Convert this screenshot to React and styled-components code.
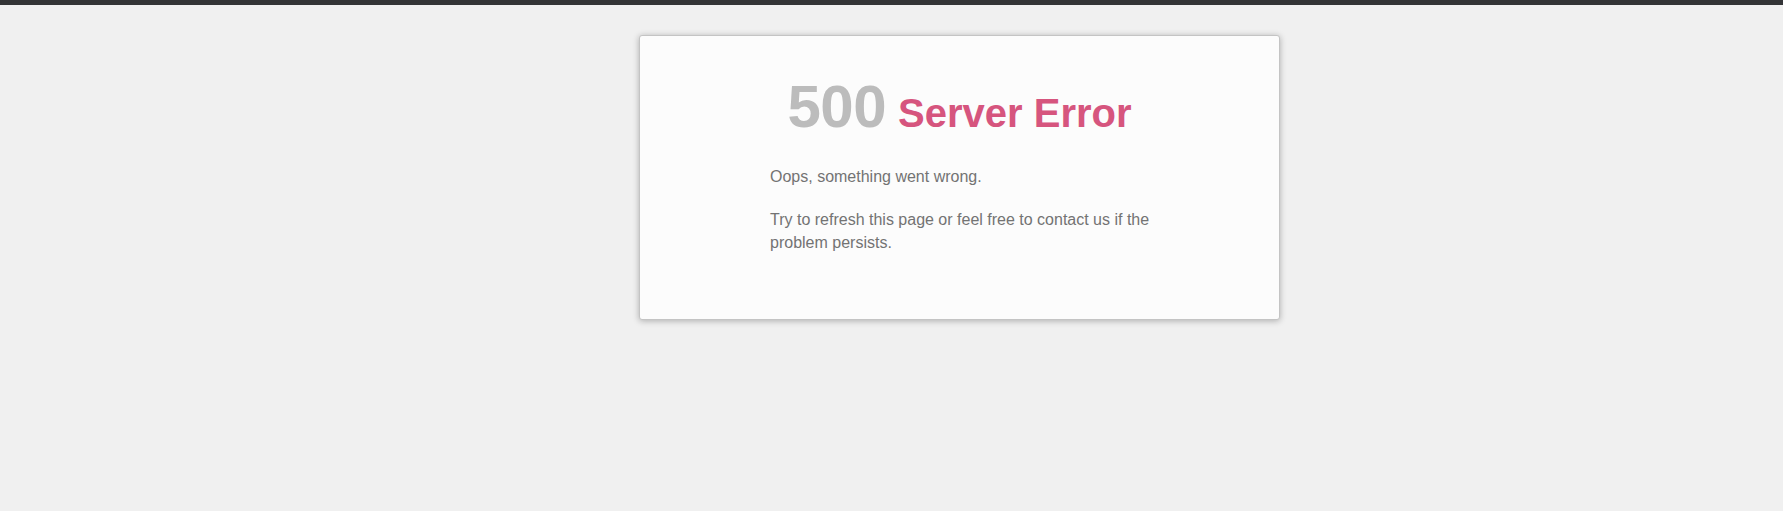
import React from "react"
import styled, { createGlobalStyle } from "styled-components"

const GlobalStyle = createGlobalStyle`
  html, body {
    margin: 0;
    padding: 0;
    background: #f0f0f0;
    font-family: "Liberation Sans", Arial, sans-serif;
  }
`

const App = () => {
  return (
    <Page>
      <GlobalStyle />
      <TopBar />
      <Main>
        <Card>
          <Title>
            <Code>500</Code>
            <Label>Server Error</Label>
          </Title>
          <Body>
            <Text>Oops, something went wrong.</Text>
            <Text>Try to refresh this page or feel free to contact us if the problem persists.</Text>
          </Body>
        </Card>
      </Main>
    </Page>
  )
}

export default App

const Page = styled.div`
  min-height: 511px;
  background: #f0f0f0;
`

const TopBar = styled.div`
  height: 5px;
  background: #333436;
`

const Main = styled.main`
  padding: 30px 0 0 639px;
`

const Card = styled.section`
  width: 639px;
  height: 283px;
  box-sizing: content-box;
  background: #fcfcfc;
  border: 1px solid #c4c4c4;
  border-radius: 3px;
  box-shadow: 0 1px 6px rgba(0, 0, 0, 0.28);
`

const Title = styled.h1`
  margin: 0;
  padding-top: 43px;
  text-align: center;
  line-height: 56px;
  font-weight: bold;
`

const Code = styled.span`
  font-size: 60px;
  color: #bcbcbc;
  letter-spacing: -0.5px;
`

const Label = styled.span`
  margin-left: 12px;
  font-size: 40px;
  color: #d6557e;
`

const Body = styled.div`
  width: 400px;
  margin: 21px 0 0 130px;
`

const Text = styled.p`
  margin: 0 0 20px;
  font-size: 16px;
  line-height: 23px;
  color: #737373;
`
